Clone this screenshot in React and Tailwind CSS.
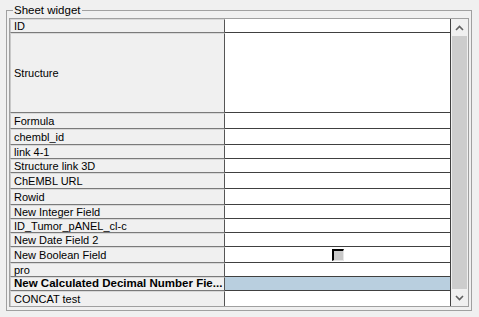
import React from "react";

const rows = [
  { label: "ID", h: 14 },
  { label: "Structure", h: 80 },
  { label: "Formula", h: 16 },
  { label: "chembl_id", h: 16 },
  { label: "link 4-1", h: 14 },
  { label: "Structure link 3D", h: 14 },
  { label: "ChEMBL URL", h: 16 },
  { label: "Rowid", h: 16 },
  { label: "New Integer Field", h: 14 },
  { label: "ID_Tumor_pANEL_cl-c", h: 14 },
  { label: "New Date Field 2", h: 14 },
  { label: "New Boolean Field", h: 16, checkbox: true },
  { label: "pro", h: 14 },
  { label: "New Calculated Decimal Number Fie...", h: 14, selected: true },
  { label: "CONCAT test", h: 15, last: true },
];

function Row({ r }) {
  return (
    <div className="flex" style={{ height: r.h }}>
      <div
        className={
          "w-[215px] shrink-0 flex items-center pl-[3px] bg-[#f0f0f0] border-r border-r-[#555] border-t border-t-[#d8d8d8] border-l border-l-[#c8c8c8] " +
          (r.last ? "" : "border-b border-b-[#7a7a7a]")
        }
      >
        <span
          className={
            "whitespace-nowrap text-black leading-none " +
            (r.selected ? "font-bold text-[11.5px]" : "text-[11px]")
          }
        >
          {r.label}
        </span>
      </div>
      <div
        className={
          "flex-1 flex items-center justify-center " +
          (r.selected ? "bg-[#b9cfdf] " : "bg-white ") +
          (r.last ? "" : "border-b border-b-[#404040]")
        }
      >
        {r.checkbox && (
          <div className="w-[12px] h-[12px] bg-[#c8c8c8] border-t-2 border-l-2 border-t-black border-l-black border-r border-b border-r-[#e6e6e6] border-b-[#e6e6e6]" />
        )}
      </div>
    </div>
  );
}

export default function App() {
  return (
    <div
      className="w-[479px] h-[317px] bg-[#f0f0f0] pt-[3px] pl-[6px]"
      style={{ fontFamily: '"Liberation Sans", Arial, sans-serif' }}
    >
      <fieldset className="w-[466px] h-[308px] border border-[#a0a0a0] px-[2px] pt-[1px] pb-[2px]">
        <legend className="ml-[4px] px-[1px] text-[11.5px] leading-[14px] text-black">
          Sheet widget
        </legend>
        <div className="border border-[#a0a0a0] h-[289px] flex">
          <div className="flex-1 flex flex-col border-r border-r-[#404040]">
            {rows.map((r) => (
              <Row key={r.label} r={r} />
            ))}
          </div>
          <div className="w-[17px] shrink-0 flex flex-col bg-[#f0f0f0]">
            <div className="h-[17px] flex items-center justify-center">
              <svg width="9" height="6" viewBox="0 0 9 6">
                <path d="M1 5 L4.5 1.5 L8 5" fill="none" stroke="#606060" strokeWidth="1.6" />
              </svg>
            </div>
            <div className="flex-1 mx-[1px] bg-[#cdcdcd]" />
            <div className="h-[17px] flex items-center justify-center">
              <svg width="9" height="6" viewBox="0 0 9 6">
                <path d="M1 1 L4.5 4.5 L8 1" fill="none" stroke="#606060" strokeWidth="1.6" />
              </svg>
            </div>
          </div>
        </div>
      </fieldset>
    </div>
  );
}
